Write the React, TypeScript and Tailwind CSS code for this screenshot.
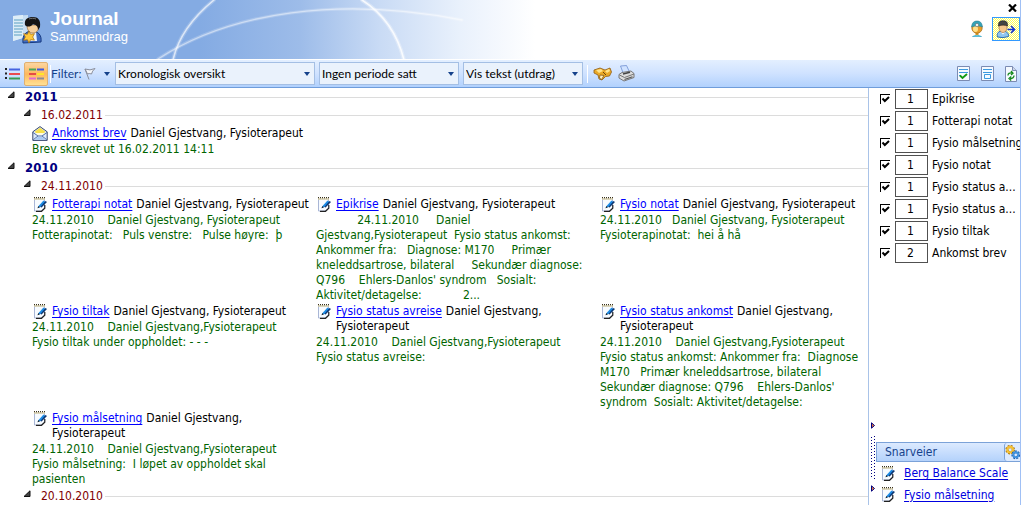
import type { ReactNode } from 'react';
import clsx from 'clsx';

type Entry = {
  title: string;
  author: string[];
  body: string;
  icon?: 'note' | 'mail';
};

const AUTHOR = ['Daniel Gjestvang, Fysioterapeut'];
const AUTHOR_WRAPPED = ['Daniel Gjestvang,', 'Fysioterapeut'];

const letters: Entry[] = [
  { title: 'Ankomst brev', author: AUTHOR, body: 'Brev skrevet ut 16.02.2011 14:11', icon: 'mail' },
];

const notes: Entry[] = [
  {
    title: 'Fotterapi notat',
    author: AUTHOR,
    body: '24.11.2010    Daniel Gjestvang, Fysioterapeut\nFotterapinotat:   Puls venstre:   Pulse høyre:  þ',
  },
  {
    title: 'Epikrise',
    author: AUTHOR,
    body: "            24.11.2010     Daniel\nGjestvang,Fysioterapeut  Fysio status ankomst:\nAnkommer fra:   Diagnose: M170     Primær\nkneleddsartrose, bilateral     Sekundær diagnose:\nQ796    Ehlers-Danlos' syndrom   Sosialt:\nAktivitet/detagelse:            2...",
  },
  {
    title: 'Fysio notat',
    author: AUTHOR,
    body: '24.11.2010   Daniel Gjestvang, Fysioterapeut\nFysioterapinotat:  hei å hå',
  },
  {
    title: 'Fysio tiltak',
    author: AUTHOR,
    body: '24.11.2010    Daniel Gjestvang,Fysioterapeut\nFysio tiltak under oppholdet: - - -',
  },
  {
    title: 'Fysio status avreise',
    author: AUTHOR_WRAPPED,
    body: '24.11.2010    Daniel Gjestvang,Fysioterapeut\nFysio status avreise:',
  },
  {
    title: 'Fysio status ankomst',
    author: AUTHOR_WRAPPED,
    body: "24.11.2010    Daniel Gjestvang,Fysioterapeut\nFysio status ankomst: Ankommer fra:  Diagnose\nM170   Primær kneleddsartrose, bilateral\nSekundær diagnose: Q796    Ehlers-Danlos'\nsyndrom  Sosialt: Aktivitet/detagelse:",
  },
  {
    title: 'Fysio målsetning',
    author: AUTHOR_WRAPPED,
    body: '24.11.2010    Daniel Gjestvang,Fysioterapeut\nFysio målsetning:  I løpet av oppholdet skal\npasienten',
  },
];

const documentTypes = [
  { label: 'Epikrise', count: 1 },
  { label: 'Fotterapi notat', count: 1 },
  { label: 'Fysio målsetning', count: 1 },
  { label: 'Fysio notat', count: 1 },
  { label: 'Fysio status a...', count: 1 },
  { label: 'Fysio status a...', count: 1 },
  { label: 'Fysio tiltak', count: 1 },
  { label: 'Ankomst brev', count: 2 },
];

const shortcuts = ['Berg Balance Scale', 'Fysio målsetning'];

const NoteIcon = () => (
  <svg className="h-[15px] w-4 shrink-0" viewBox="0 0 16 15" aria-hidden="true">
    <path d="M2.500 2h10v9l-3 3h-7z" fill="#f7fbff" stroke="#a9b6d6" />
    <path d="M4 14.300h5.500l3.300-3V8" fill="none" stroke="#222" strokeWidth="1.200" />
    <path d="M2 .800h12" stroke="#3a3320" strokeWidth="1.400" strokeDasharray="1 1" />
    <path d="M2 2h11" stroke="#e3d292" />
    <path d="M6 10.500 7 8.500l4.500-5 2 1.800L9 9.800z" fill="#1c8ce6" />
    <path d="m8.300 10 5.200-6 1.500 1L9.600 10.400z" fill="#0b3775" />
    <path d="m5.400 11.300 1-2.300 1.500 1.500z" fill="#123" />
  </svg>
);

const MailIcon = () => (
  <svg className="h-[15px] w-4 shrink-0" viewBox="0 0 16 15" aria-hidden="true">
    <path d="M.8 5.800 8 .6l7.200 5.200v8.600H.8z" fill="#dce9fb" stroke="#39496f" />
    <path d="M2.500 5.800 8 1.800l5.500 4L10 8.500H6z" fill="#f7e14a" />
    <path d="M3 7h10l-3 2.300H6z" fill="#fffbe0" />
    <path d="M1 6.500 6 10h4l5-3.500M1.200 13.800 6 10M14.800 13.800 10 10" fill="none" stroke="#5673aa" />
    <path d="m2.300 13.800 4-3h3.400l4 3z" fill="#a8c9f3" />
  </svg>
);

const Expander = ({ label }: { label: string }) => (
  <button type="button" aria-label={`Skjul ${label}`} className="mb-1 h-2 w-2 shrink-0">
    <svg className="h-2 w-2" viewBox="0 0 8 8">
      <path d="M7 .8V6.500H1z" fill="#444" stroke="#111" />
    </svg>
  </button>
);

const YearHeading = ({ children }: { children: string }) => (
  <div className="flex h-[18px] items-center pl-[7px]">
    <Expander label={children} />
    <h2 className="ml-[10px] text-[13px] font-bold text-[#000080]">{children}</h2>
    <span className="ml-[2px] h-px flex-1 bg-[#dcdcdc]" />
  </div>
);

const DateHeading = ({ children }: { children: string }) => (
  <div className="flex h-[18px] items-center pl-[23px]">
    <Expander label={children} />
    <h3 className="ml-[10px] text-[#800000]">{children}</h3>
    <span className="ml-[2px] h-px flex-1 bg-[#dcdcdc]" />
  </div>
);

const EntryCard = ({ entry }: { entry: Entry }) => (
  <article>
    <div className="flex gap-1">
      {entry.icon === 'mail' ? <MailIcon /> : <NoteIcon />}
      <div className="leading-[15px] whitespace-nowrap">
        <a href="#" className="mr-1 text-[#0000ff] underline underline-offset-2">
          {entry.title}
        </a>
        <span>{entry.author[0]}</span>
        {entry.author.slice(1).map((line) => (
          <p key={line}>{line}</p>
        ))}
      </div>
    </div>
    <p className="pt-px leading-[15px] whitespace-pre text-[#006400]">{entry.body}</p>
  </article>
);

const EntryGrid = ({ entries }: { entries: Entry[] }) => (
  <div className="grid grid-cols-[284px_284px_1fr] gap-y-px pt-[2px] pl-8">
    {entries.map((entry) => (
      <EntryCard key={entry.title} entry={entry} />
    ))}
  </div>
);

const ToolbarSelect = ({ label, value, className }: { label: string; value: string; className: string }) => (
  <div className={clsx('relative', className)}>
    <select
      aria-label={label}
      className="h-[23px] w-full appearance-none border border-[#a4bfe4] bg-[#eaf2fc] pl-[2px] text-black"
    >
      <option>{value}</option>
    </select>
    <svg className="pointer-events-none absolute top-[10px] right-[5px] h-[4px] w-[6px]" viewBox="0 0 6 4">
      <path d="M0 0h6L3 4z" fill="#15428b" />
    </svg>
  </div>
);

const IconButton = ({ label, className, children }: { label: string; className?: string; children: ReactNode }) => (
  <button type="button" aria-label={label} className={clsx('flex shrink-0 items-center justify-center', className)}>
    {children}
  </button>
);

const Banner = () => (
  <header className="relative flex h-[59px] shrink-0 justify-between bg-[linear-gradient(90deg,#84abe3_0,#84abe3_200px,#9dbce9_300px,#c9dbf5_380px,#e9f1fc_460px,#fff_535px)]">
    {/* light arcs behind the title */}
    <svg className="absolute top-0 left-0 h-[59px] w-[540px]" viewBox="0 0 540 59" fill="none" aria-hidden="true">
      <g stroke="#fff" strokeLinecap="round">
        <path d="M173 60C178 38 192 18 214 0" strokeWidth="4" opacity=".2" />
        <path d="M173 60C178 38 192 18 214 0" strokeWidth="1.6" opacity=".65" />
        <path d="M158 59C230 12 340-4 462 20" strokeWidth="3.4" opacity=".2" />
        <path d="M158 59C230 12 340-4 462 20" strokeWidth="1.4" opacity=".45" />
        <path d="M362 0C384 14 398 36 404 60" strokeWidth="4" opacity=".3" />
        <path d="M362 0C384 14 398 36 404 60" strokeWidth="1.6" opacity=".8" />
      </g>
    </svg>
    <div className="relative flex pt-[9px] pl-3">
      <svg className="mt-[5px] h-[30px] w-[31px]" viewBox="0 0 31 30" aria-hidden="true">
        <path d="M1 2 11 1v23L1 27z" fill="#eef6fb" />
        <path d="M1 2 16 1v21L1 27z" fill="#d8ebf6" opacity=".8" />
        <path d="M2 6h9M2 9h9M2 12h9M2 15h9M2 18h8M2 21h8" stroke="#5b9fc2" />
        <path d="M11 29c-1-8 3-12 9-12s10 4 9 11z" fill="#3f6cc4" stroke="#173a80" />
        <path d="M17 18h7l1 9h-8z" fill="#eaf4ff" />
        <path d="M15 11c0 6 3 8 6 8s6-2 6-8z" fill="#f6cf9b" stroke="#8a5a2a" strokeWidth=".6" />
        <path d="M13 11c-1-6 3-8 8-8s8 3 7 10l-2 3c0-4-2-5-5-6-2 3-5 3-7 2z" fill="#151515" />
        <path d="M17 5c2-1 5-1 7 0" stroke="#777" fill="none" />
        <path d="m17 17 1.6 3.3 3.8-.6-1.7 3.3 1.7 3.2-3.8-.5L17 29l-1.6-3.3-3.8.5 1.7-3.2-1.7-3.3 3.8.6z" fill="#ffc83d" stroke="#a36a0c" strokeWidth=".7" />
      </svg>
      <div className="ml-[7px] font-['Liberation_Sans',sans-serif] text-white">
        <h1 className="text-[19px] leading-5 font-bold">Journal</h1>
        <p className="text-[13px] leading-[15px]">Sammendrag</p>
      </div>
    </div>
    <div className="relative flex flex-col items-end">
      <IconButton label="Lukk" className="mt-1 mr-[3px] h-2 w-[9px]">
        <svg className="h-2 w-[9px]" viewBox="0 0 9 8">
          <path d="m1 .5 7 7M8 .5l-7 7" stroke="#000" strokeWidth="2.2" />
        </svg>
      </IconButton>
      <div className="mt-[5px] flex items-center gap-[7px]">
        <IconButton label="Pasient" className="h-[18px] w-4">
          <svg className="h-[18px] w-4" viewBox="0 0 16 18">
            <path d="M3.500 16.500q4.500-3 9 0z" fill="#7fdcf2" stroke="#3aa5c4" strokeWidth=".7" />
            <path d="M6.500 12.500h3V15h-3z" fill="#d39428" />
            <circle cx="8" cy="8" r="5.200" fill="#e89f2c" stroke="#a36c18" strokeWidth=".7" />
            <ellipse cx="6.500" cy="9" rx="2.500" ry="3" fill="#ffe08a" />
            <path d="M2.500 7C3 2.500 5 1 8 1s5 1.500 5.500 6C10 5.500 6 5.500 2.500 7z" fill="#35a3b8" stroke="#26788a" strokeWidth=".5" />
            <circle cx="8" cy="5" r="1.600" fill="#f4ffff" stroke="#777" strokeWidth=".7" />
          </svg>
        </IconButton>
        <IconButton
          label="Bytt bruker"
          className="h-6 w-7 border border-[#3399ff] bg-[repeating-conic-gradient(#ffff50_0_25%,#ffffff_0_50%)] bg-[length:2px_2px]"
        >
          <svg className="h-[18px] w-5" viewBox="0 0 20 18">
            <path d="M1.500 17c-1-4 1-6 5-6s6.500 2 6 5.500Q7 18.500 1.500 17z" fill="#8ec5ef" stroke="#2d6fb0" />
            <path d="M4.500 12 7 14.500 9.500 12z" fill="#eefaff" />
            <path d="M3 5h8c.5 5-1.500 7.500-4 7.500S2.500 10 3 5z" fill="#f6c78e" stroke="#936039" strokeWidth=".6" />
            <path d="M2.500 6C2 2 4 .8 7 .8S12 2 11.500 6C9 5 6 4.500 2.500 6z" fill="#444" stroke="#222" strokeWidth=".6" />
            <path d="M11.500 9.500H18M15 6l3.500 3.500L15 13" fill="none" stroke="#1232dc" strokeWidth="1.600" />
          </svg>
        </IconButton>
      </div>
    </div>
  </header>
);

const Toolbar = () => (
  <div className="flex h-[29px] shrink-0 items-center border-t border-b border-t-white border-b-[#6f9ddb] bg-linear-to-b from-[#e3efff] via-[#cfe2ff] to-[#b1d1fd] pr-[3px] font-['Lato','Open_Sans',sans-serif] text-xs">
    <IconButton label="Liste" className="h-6 w-6">
      <svg className="h-3 w-[15px]" viewBox="0 0 15 12">
        <path d="M0 1h2M0 5.500h2M0 10h2" stroke="#222" strokeWidth="2" />
        <path d="M4 1.500h11" stroke="#4664e0" strokeWidth="2" />
        <path d="M4 6h11" stroke="#ea4b50" strokeWidth="2" />
        <path d="M4 10.500h11" stroke="#3a9a54" strokeWidth="2" />
      </svg>
    </IconButton>
    <IconButton
      label="Kolonner"
      className="h-6 w-6 rounded-[2px] border border-[#e0b070] bg-linear-to-b from-[#fbd5a0] via-[#fdb85c] to-[#ffe093]"
    >
      <svg className="h-3 w-[15px]" viewBox="0 0 15 12">
        <path d="M0 1.500h7" stroke="#4ba65a" strokeWidth="2" />
        <path d="M8 1.500h7" stroke="#3d58dd" strokeWidth="2" />
        <path d="M0 6h7" stroke="#e64b45" strokeWidth="2" />
        <path d="M8 6h7" stroke="#ffe629" strokeWidth="2" />
        <path d="M0 10.500h7" stroke="#e36bd0" strokeWidth="2" />
        <path d="M8 10.500h7" stroke="#8b8b95" strokeWidth="2" />
      </svg>
    </IconButton>
    <span className="ml-[2px] h-[18px] w-px bg-white" />
    <span className="w-8 text-[#15428b]">Filter:</span>
    <IconButton label="Filter" className="h-6 w-7 gap-2">
      <svg className="h-3 w-3" viewBox="0 0 12 12">
        <path d="M1 1q5 2 10-.5Q8 3 7.500 6 5 5 3.500 6z" fill="#f4f6fa" stroke="#8a8f9c" />
        <path d="m1 1 4 10.500" stroke="#8a8f9c" />
      </svg>
      <svg className="h-1 w-[6px]" viewBox="0 0 6 4">
        <path d="M0 0h6L3 4z" fill="#15428b" />
      </svg>
    </IconButton>
    <div className="ml-1 flex gap-1">
      <ToolbarSelect label="Visning" value="Kronologisk oversikt" className="w-[200px]" />
      <ToolbarSelect label="Periode" value="Ingen periode satt" className="w-[140px]" />
      <ToolbarSelect label="Tekst" value="Vis tekst (utdrag)" className="w-[120px]" />
    </div>
    <span className="ml-1 h-[18px] w-px bg-white" />
    <IconButton label="Søk" className="ml-1 h-6 w-5">
      <svg className="h-[14px] w-[19px]" viewBox="0 0 19 14">
        <path d="M1 3 7 1l5 2 5-2 1.500 4-2 4-4 .5L9 13l-3-1-1-4-4-2z" fill="#e9a928" stroke="#8f5c12" strokeWidth=".8" />
        <path d="m3 3 5-1 2 2-4 2zM12 4l4-2 1 2-3 2z" fill="#ffe38a" />
        <path d="m7 8 4 .500-2.500 4L6.500 11z" fill="#fff1c0" stroke="#7a4d0d" strokeWidth=".7" />
        <path d="m10 5 3 3" stroke="#6b430b" />
      </svg>
    </IconButton>
    <IconButton label="Skriv ut" className="ml-1 h-6 w-5">
      <svg className="h-[17px] w-[17px]" viewBox="0 0 17 17">
        <path d="m2.500 1 6-.5 3 6.500-6 2z" fill="#cfe2ff" stroke="#6f8fd0" strokeWidth=".8" />
        <path d="m1 9.500 3-2L13 6l3 2.500v4L6 16l-5-3z" fill="#dcdcdc" stroke="#6c6c6c" strokeWidth=".9" />
        <path d="m1.500 10 5 2.500L16 9" fill="none" stroke="#777" />
        <path d="m5 9 7-1.800" stroke="#444" strokeWidth="1.400" />
        <path d="m6.500 14.500 8-2.700" stroke="#555" strokeWidth="1.200" />
      </svg>
    </IconButton>
    <div className="ml-auto flex gap-[11px]">
      <IconButton label="Godkjenn">
        <svg className="h-[15px] w-[13px]" viewBox="0 0 13 15">
          <path d="M.5.500h12v14H.5z" fill="#f5faff" stroke="#7b8bb2" />
          <path d="M2 3.500h9M2 6.500h9M2 9.500h2" stroke="#3c9ae0" />
          <path d="m3 9.500 2.500 2.500L10 8" fill="none" stroke="#129a12" strokeWidth="1.800" />
        </svg>
      </IconButton>
      <IconButton label="Lagre">
        <svg className="h-[15px] w-[13px]" viewBox="0 0 13 15">
          <path d="M.5.500h12v14H.5z" fill="#f5faff" stroke="#7b8bb2" />
          <path d="M2 3.500h9M2 6.500h9M3.500 8.500h6v4h-6z" fill="none" stroke="#3c9ae0" />
        </svg>
      </IconButton>
      <IconButton label="Oppdater">
        <svg className="h-4 w-3" viewBox="0 0 12 16">
          <path d="M.5.500h7l4 4v11H.5z" fill="#f5faff" stroke="#7b8bb2" />
          <path d="M7.500.500v4h4" fill="#ccd6ea" stroke="#7b8bb2" />
          <path d="M3 9.500q0-3 4-2.500M6 5l2 2.200L6 9M9 9.500q0 3-4 3M6.200 10.500 4 12.500l2.200 2" fill="none" stroke="#178a20" strokeWidth="1.300" />
        </svg>
      </IconButton>
    </div>
  </div>
);

const SplitterArrow = () => (
  <svg className="h-[7px] w-1" viewBox="0 0 4 7" aria-hidden="true">
    <path d="M.5.800v5.400L3.500 3.500z" fill="#e07840" stroke="#000080" />
  </svg>
);

const Splitter = () => (
  <div className="flex w-[7px] shrink-0 flex-col items-start justify-end pb-[13px] pl-[2px]">
    <SplitterArrow />
    <svg className="my-[6px] h-11 w-1" viewBox="0 0 4 44" aria-hidden="true">
      <path d="M.5 2v41M3.500 1v43" stroke="#000080" strokeDasharray="1 2" />
    </svg>
    <SplitterArrow />
  </div>
);

const Sidebar = () => (
  <aside className="flex w-[152px] shrink-0 border-l border-[#a9c3e8]">
    <Splitter />
    <div className="flex min-w-0 flex-1 flex-col">
      <ul className="flex flex-1 flex-col gap-[2px] pt-px pl-1">
        {documentTypes.map((type, index) => (
          <li key={index} className="flex h-5 items-center">
            <span className="grid shrink-0">
              <input
                id={`type-${index}`}
                type="checkbox"
                defaultChecked
                className="peer col-start-1 row-start-1 h-[10px] w-[10px] appearance-none border-t border-l border-black bg-white"
              />
              <svg
                className="pointer-events-none invisible col-start-1 row-start-1 h-[10px] w-[10px] peer-checked:visible"
                viewBox="0 0 10 10"
              >
                <path d="M2.500 4.500 4.800 7 9 3" fill="none" stroke="#000" strokeWidth="2" />
              </svg>
            </span>
            <span className="ml-[5px] flex h-5 w-[33px] shrink-0 items-center justify-center border border-[#505050] pr-[2px]">
              {type.count}
            </span>
            <label htmlFor={`type-${index}`} className="ml-1 whitespace-nowrap">
              {type.label}
            </label>
          </li>
        ))}
      </ul>
      <div className="flex h-5 shrink-0 items-center border border-r-0 border-[#7ba2d8] bg-linear-to-b from-[#dceaff] to-[#b4d2fb] pl-2">
        <h2 className="flex-1 text-[#15428b]">Snarveier</h2>
        <IconButton label="Innstillinger" className="h-[18px] w-4 rounded-l-[3px] border-l border-[#7ba2d8] bg-[#dceaff]">
          <svg className="h-4 w-4" viewBox="0 0 16 16">
            <circle cx="5.500" cy="5.500" r="3.300" fill="none" stroke="#a8740c" strokeWidth="3.600" strokeDasharray="1.600 1" />
            <circle cx="5.500" cy="5.500" r="3" fill="none" stroke="#f5c032" strokeWidth="2.200" />
            <circle cx="11.500" cy="11" r="3" fill="none" stroke="#1a5ba8" strokeWidth="3.400" strokeDasharray="1.600 1" />
            <circle cx="11.500" cy="11" r="2.700" fill="none" stroke="#3f93e0" strokeWidth="2" />
          </svg>
        </IconButton>
      </div>
      <ul className="shrink-0 pl-1">
        {shortcuts.map((shortcut) => (
          <li key={shortcut} className="flex h-[22px] items-center gap-2 last:h-[21px]">
            <NoteIcon />
            <a href="#" className="whitespace-nowrap text-[#0000e0] underline underline-offset-2">
              {shortcut}
            </a>
          </li>
        ))}
      </ul>
    </div>
  </aside>
);

const App = () => (
  <div className="mr-px flex h-screen flex-col overflow-hidden border-r border-[#a0c0f5] bg-white font-['DejaVu_Sans_Condensed','DejaVu_Sans',sans-serif] text-xs text-black">
    <Banner />
    <Toolbar />
    <div className="flex min-h-0 flex-1">
      <main className="min-w-0 flex-1 overflow-hidden">
        <section>
          <YearHeading>2011</YearHeading>
          <DateHeading>16.02.2011</DateHeading>
          <EntryGrid entries={letters} />
        </section>
        <section className="mt-[2px]">
          <YearHeading>2010</YearHeading>
          <DateHeading>24.11.2010</DateHeading>
          <EntryGrid entries={notes} />
          <DateHeading>20.10.2010</DateHeading>
        </section>
      </main>
      <Sidebar />
    </div>
  </div>
);

export default App;
